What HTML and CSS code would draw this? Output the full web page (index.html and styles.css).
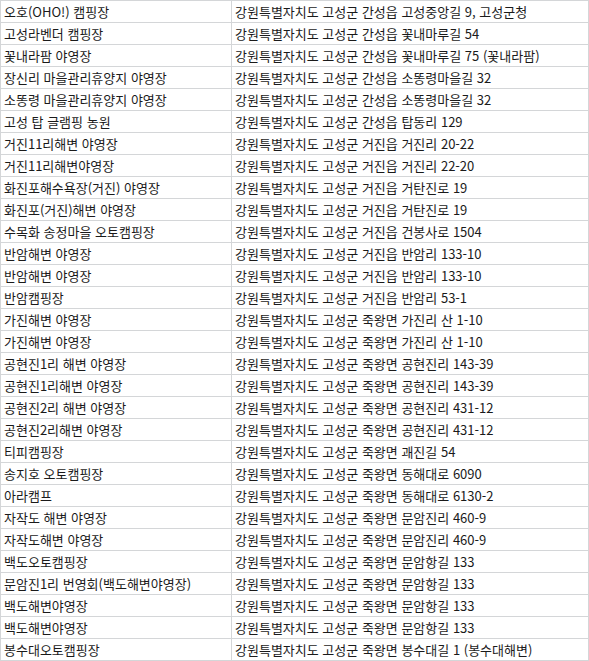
FILE: index.html
```html
<!DOCTYPE html>
<html lang="ko">
<head>
<meta charset="utf-8">
<link rel="stylesheet" href="styles.css">
</head>
<body>
<table class="sheet">
<colgroup><col class="c-name"><col class="c-addr"></colgroup>
<tbody>
<tr><td>오호(OHO!) 캠핑장</td><td>강원특별자치도 고성군 간성읍 고성중앙길 9, 고성군청</td></tr>
<tr><td>고성라벤더 캠핑장</td><td>강원특별자치도 고성군 간성읍 꽃내마루길 54</td></tr>
<tr><td>꽃내라팜 야영장</td><td>강원특별자치도 고성군 간성읍 꽃내마루길 75 (꽃내라팜)</td></tr>
<tr><td>장신리 마을관리휴양지 야영장</td><td>강원특별자치도 고성군 간성읍 소똥령마을길 32</td></tr>
<tr><td>소똥령 마을관리휴양지 야영장</td><td>강원특별자치도 고성군 간성읍 소똥령마을길 32</td></tr>
<tr><td>고성 탑 글램핑 농원</td><td>강원특별자치도 고성군 간성읍 탑동리 129</td></tr>
<tr><td>거진11리해변 야영장</td><td>강원특별자치도 고성군 거진읍 거진리 20-22</td></tr>
<tr><td>거진11리해변야영장</td><td>강원특별자치도 고성군 거진읍 거진리 22-20</td></tr>
<tr><td>화진포해수욕장(거진) 야영장</td><td>강원특별자치도 고성군 거진읍 거탄진로 19</td></tr>
<tr><td>화진포(거진)해변 야영장</td><td>강원특별자치도 고성군 거진읍 거탄진로 19</td></tr>
<tr><td>수목화 송정마을 오토캠핑장</td><td>강원특별자치도 고성군 거진읍 건봉사로 1504</td></tr>
<tr><td>반암해변 야영장</td><td>강원특별자치도 고성군 거진읍 반암리 133-10</td></tr>
<tr><td>반암해변 야영장</td><td>강원특별자치도 고성군 거진읍 반암리 133-10</td></tr>
<tr><td>반암캠핑장</td><td>강원특별자치도 고성군 거진읍 반암리 53-1</td></tr>
<tr><td>가진해변 야영장</td><td>강원특별자치도 고성군 죽왕면 가진리 산 1-10</td></tr>
<tr><td>가진해변 야영장</td><td>강원특별자치도 고성군 죽왕면 가진리 산 1-10</td></tr>
<tr><td>공현진1리 해변 야영장</td><td>강원특별자치도 고성군 죽왕면 공현진리 143-39</td></tr>
<tr><td>공현진1리해변 야영장</td><td>강원특별자치도 고성군 죽왕면 공현진리 143-39</td></tr>
<tr><td>공현진2리 해변 야영장</td><td>강원특별자치도 고성군 죽왕면 공현진리 431-12</td></tr>
<tr><td>공현진2리해변 야영장</td><td>강원특별자치도 고성군 죽왕면 공현진리 431-12</td></tr>
<tr><td>티피캠핑장</td><td>강원특별자치도 고성군 죽왕면 괘진길 54</td></tr>
<tr><td>송지호 오토캠핑장</td><td>강원특별자치도 고성군 죽왕면 동해대로 6090</td></tr>
<tr><td>아라캠프</td><td>강원특별자치도 고성군 죽왕면 동해대로 6130-2</td></tr>
<tr><td>자작도 해변 야영장</td><td>강원특별자치도 고성군 죽왕면 문암진리 460-9</td></tr>
<tr><td>자작도해변 야영장</td><td>강원특별자치도 고성군 죽왕면 문암진리 460-9</td></tr>
<tr><td>백도오토캠핑장</td><td>강원특별자치도 고성군 죽왕면 문암항길 133</td></tr>
<tr><td>문암진1리 번영회(백도해변야영장)</td><td>강원특별자치도 고성군 죽왕면 문암항길 133</td></tr>
<tr><td>백도해변야영장</td><td>강원특별자치도 고성군 죽왕면 문암항길 133</td></tr>
<tr><td>백도해변야영장</td><td>강원특별자치도 고성군 죽왕면 문암항길 133</td></tr>
<tr><td>봉수대오토캠핑장</td><td>강원특별자치도 고성군 죽왕면 봉수대길 1 (봉수대해변)</td></tr>
</tbody>
</table>
</body>
</html>
```
FILE: styles.css
```css
html, body {
  margin: 0;
  padding: 0;
  background: #ffffff;
}
.sheet {
  border-collapse: collapse;
  table-layout: fixed;
  width: 589px;
  height: 661px;
  font-family: "Noto Sans CJK KR", "Noto Sans", sans-serif;
  font-size: 13px;
  color: #1a1a1a;
}
.c-name { width: 231px; }
.c-addr { width: 357px; }
.sheet td {
  border: 1px solid #d4d6d8;
  padding: 0 3px;
  white-space: nowrap;
  overflow: hidden;
  line-height: 15px;
  vertical-align: middle;
}
```
